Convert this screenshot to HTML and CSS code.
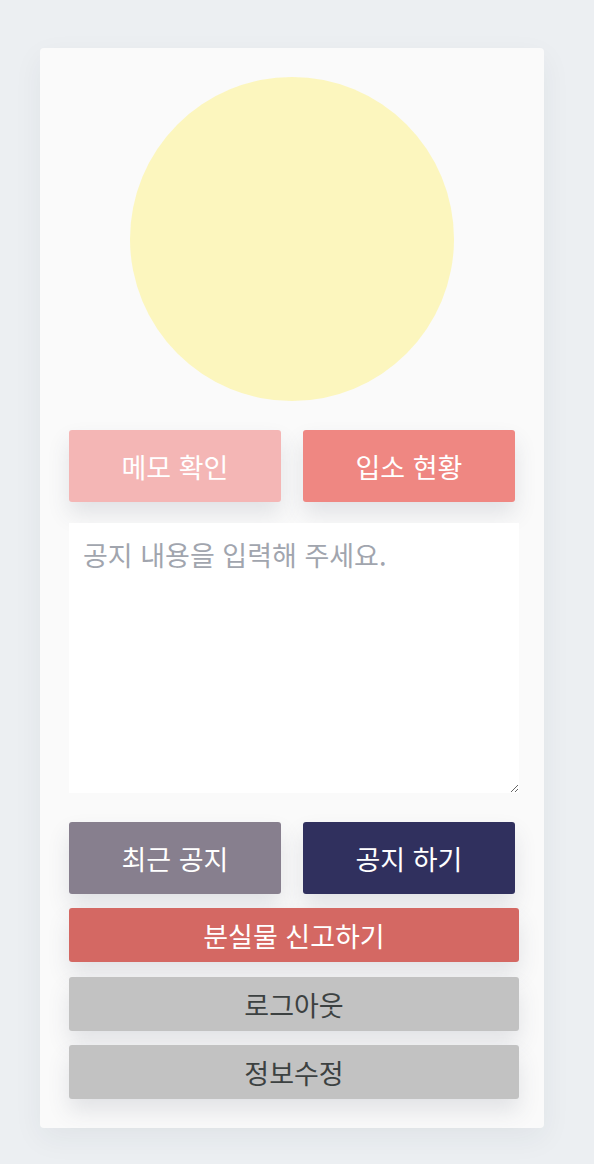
FILE: index.html
```html
<!DOCTYPE html>
<html lang="ko">
<head>
<meta charset="utf-8">
<title>관리</title>
<link rel="stylesheet" href="styles.css">
</head>
<body>
<div class="card">
  <div class="avatar"></div>
  <div class="row">
    <button class="btn big memo">메모 확인</button>
    <button class="btn big status">입소 현황</button>
  </div>
  <textarea class="notice" placeholder="공지 내용을 입력해 주세요."></textarea>
  <div class="row row2">
    <button class="btn big recent">최근 공지</button>
    <button class="btn big post">공지 하기</button>
  </div>
  <button class="btn wide lost">분실물 신고하기</button>
  <button class="btn wide gray">로그아웃</button>
  <button class="btn wide gray">정보수정</button>
</div>
</body>
</html>
```

FILE: styles.css
```css
* { box-sizing: border-box; }
html, body { margin: 0; padding: 0; }
body {
  background: #eceff2;
  font-family: "Noto Sans CJK KR", "Noto Sans", sans-serif;
  padding: 48px 0 36px 40px;
}
.card {
  width: 504px;
  height: 1080px;
  background: #fafafa;
  border-radius: 4px;
  box-shadow: 0 10px 30px rgba(40, 50, 70, 0.06);
  padding: 29px 25px 0 29px;
  display: flex;
  flex-direction: column;
}
.avatar {
  width: 324px;
  height: 324px;
  border-radius: 50%;
  background: #fcf6be;
  align-self: center;
  margin-left: -4px;
}
.row {
  display: flex;
  gap: 22px;
  margin-top: 29px;
}
.row2 { margin-top: 29px; }
.btn {
  border: none;
  border-radius: 3px;
  font-family: inherit;
  color: #fff;
  font-size: 27px;
  font-weight: 400;
  line-height: 1;
  padding: 0;
  box-shadow: 0 12px 22px rgba(60, 70, 90, 0.13);
  cursor: pointer;
}
.big {
  width: 212px;
  height: 72px;
}
.memo { background: #f4b6b5; }
.status { background: #ef8782; }
.recent { background: #877f8e; }
.post { background: #30305e; }
.notice {
  margin-top: 21px;
  width: 450px;
  height: 270px;
  border: none;
  background: #fff;
  padding: 14px 14px;
  font-family: inherit;
  font-size: 27px;
  line-height: 1.3;
  outline: none;
  display: block;
}
.notice::placeholder { color: #a1a5ae; }
.wide {
  width: 450px;
  height: 54px;
}
.lost {
  background: #d46863;
  margin-top: 14px;
}
.gray {
  background: #c2c2c2;
  color: #3c4141;
  margin-top: 15px;
}
.gray + .gray { margin-top: 14px; }
```
